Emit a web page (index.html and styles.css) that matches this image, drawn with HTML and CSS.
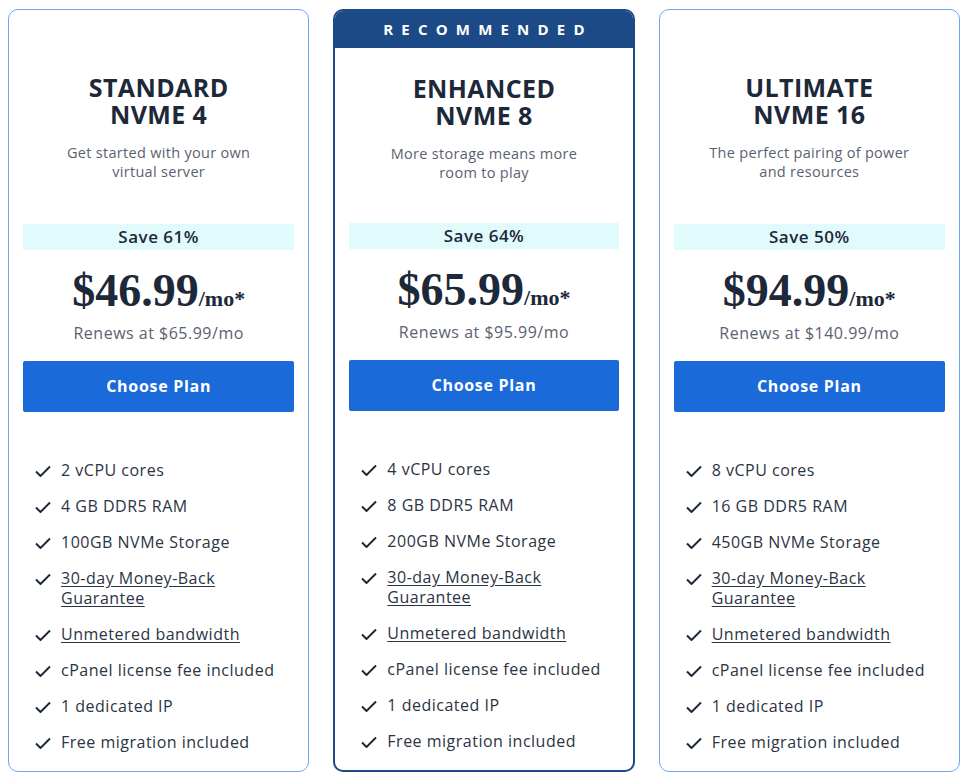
FILE: index.html
```html
<!DOCTYPE html>
<html lang="en">
<head>
<meta charset="utf-8">
<title>VPS Plans</title>
<link rel="stylesheet" href="styles.css">
</head>
<body>
<div class="plans">
  <div class="card">
    <div class="head">
      <h2 class="title">STANDARD<br>NVME 4</h2>
      <p class="sub">Get started with your own<br>virtual server</p>
    </div>
    <div class="save">Save 61%</div>
    <div class="price"><span class="amt">$46.99</span><span class="per">/mo*</span></div>
    <div class="renew">Renews at $65.99/mo</div>
    <a class="btn">Choose Plan</a>
    <ul class="feats">
      <li><svg class="chk" viewBox="0 0 16 12"><path d="M1 6.5 L5.5 11 L15 1.5"/></svg><span>2 vCPU cores</span></li>
      <li><svg class="chk" viewBox="0 0 16 12"><path d="M1 6.5 L5.5 11 L15 1.5"/></svg><span>4 GB DDR5 RAM</span></li>
      <li><svg class="chk" viewBox="0 0 16 12"><path d="M1 6.5 L5.5 11 L15 1.5"/></svg><span>100GB NVMe Storage</span></li>
      <li><svg class="chk" viewBox="0 0 16 12"><path d="M1 6.5 L5.5 11 L15 1.5"/></svg><span class="u">30-day Money-Back<br>Guarantee</span></li>
      <li><svg class="chk" viewBox="0 0 16 12"><path d="M1 6.5 L5.5 11 L15 1.5"/></svg><span class="u">Unmetered bandwidth</span></li>
      <li><svg class="chk" viewBox="0 0 16 12"><path d="M1 6.5 L5.5 11 L15 1.5"/></svg><span>cPanel license fee included</span></li>
      <li><svg class="chk" viewBox="0 0 16 12"><path d="M1 6.5 L5.5 11 L15 1.5"/></svg><span>1 dedicated IP</span></li>
      <li><svg class="chk" viewBox="0 0 16 12"><path d="M1 6.5 L5.5 11 L15 1.5"/></svg><span>Free migration included</span></li>
    </ul>
  </div>

  <div class="card rec">
    <div class="banner">RECOMMENDED</div>
    <div class="head">
      <h2 class="title">ENHANCED<br>NVME 8</h2>
      <p class="sub">More storage means more<br>room to play</p>
    </div>
    <div class="save">Save 64%</div>
    <div class="price"><span class="amt">$65.99</span><span class="per">/mo*</span></div>
    <div class="renew">Renews at $95.99/mo</div>
    <a class="btn">Choose Plan</a>
    <ul class="feats">
      <li><svg class="chk" viewBox="0 0 16 12"><path d="M1 6.5 L5.5 11 L15 1.5"/></svg><span>4 vCPU cores</span></li>
      <li><svg class="chk" viewBox="0 0 16 12"><path d="M1 6.5 L5.5 11 L15 1.5"/></svg><span>8 GB DDR5 RAM</span></li>
      <li><svg class="chk" viewBox="0 0 16 12"><path d="M1 6.5 L5.5 11 L15 1.5"/></svg><span>200GB NVMe Storage</span></li>
      <li><svg class="chk" viewBox="0 0 16 12"><path d="M1 6.5 L5.5 11 L15 1.5"/></svg><span class="u">30-day Money-Back<br>Guarantee</span></li>
      <li><svg class="chk" viewBox="0 0 16 12"><path d="M1 6.5 L5.5 11 L15 1.5"/></svg><span class="u">Unmetered bandwidth</span></li>
      <li><svg class="chk" viewBox="0 0 16 12"><path d="M1 6.5 L5.5 11 L15 1.5"/></svg><span>cPanel license fee included</span></li>
      <li><svg class="chk" viewBox="0 0 16 12"><path d="M1 6.5 L5.5 11 L15 1.5"/></svg><span>1 dedicated IP</span></li>
      <li><svg class="chk" viewBox="0 0 16 12"><path d="M1 6.5 L5.5 11 L15 1.5"/></svg><span>Free migration included</span></li>
    </ul>
  </div>

  <div class="card">
    <div class="head">
      <h2 class="title">ULTIMATE<br>NVME 16</h2>
      <p class="sub">The perfect pairing of power<br>and resources</p>
    </div>
    <div class="save">Save 50%</div>
    <div class="price"><span class="amt">$94.99</span><span class="per">/mo*</span></div>
    <div class="renew">Renews at $140.99/mo</div>
    <a class="btn">Choose Plan</a>
    <ul class="feats">
      <li><svg class="chk" viewBox="0 0 16 12"><path d="M1 6.5 L5.5 11 L15 1.5"/></svg><span>8 vCPU cores</span></li>
      <li><svg class="chk" viewBox="0 0 16 12"><path d="M1 6.5 L5.5 11 L15 1.5"/></svg><span>16 GB DDR5 RAM</span></li>
      <li><svg class="chk" viewBox="0 0 16 12"><path d="M1 6.5 L5.5 11 L15 1.5"/></svg><span>450GB NVMe Storage</span></li>
      <li><svg class="chk" viewBox="0 0 16 12"><path d="M1 6.5 L5.5 11 L15 1.5"/></svg><span class="u">30-day Money-Back<br>Guarantee</span></li>
      <li><svg class="chk" viewBox="0 0 16 12"><path d="M1 6.5 L5.5 11 L15 1.5"/></svg><span class="u">Unmetered bandwidth</span></li>
      <li><svg class="chk" viewBox="0 0 16 12"><path d="M1 6.5 L5.5 11 L15 1.5"/></svg><span>cPanel license fee included</span></li>
      <li><svg class="chk" viewBox="0 0 16 12"><path d="M1 6.5 L5.5 11 L15 1.5"/></svg><span>1 dedicated IP</span></li>
      <li><svg class="chk" viewBox="0 0 16 12"><path d="M1 6.5 L5.5 11 L15 1.5"/></svg><span>Free migration included</span></li>
    </ul>
  </div>
</div>
</body>
</html>
```

FILE: styles.css
```css
* { box-sizing: border-box; }
html, body { background: #ffffff; }
body {
  margin: 9px 8px 0 8px;
  font-family: "Open Sans", "Noto Sans", sans-serif;
  color: #1e2a3b;
}
.plans {
  display: grid;
  grid-template-columns: repeat(3, 1fr);
  gap: 24px;
}
.card {
  border: 1px solid #67a7f4;
  border-radius: 10px;
  padding: 64px 14px 19px 14px;
  display: flex;
  flex-direction: column;
  height: 763px;
}
.card.rec {
  border: 2px solid #1c4a86;
  padding: 0 14px 19px 14px;
  overflow: hidden;
}
.banner {
  background: #1c4a86;
  color: #ffffff;
  font-weight: 700;
  font-size: 15px;
  letter-spacing: 8.2px;
  height: 37px;
  line-height: 37px;
  text-align: center;
  margin: 0 -14px 27px -14px;
  padding-left: 8px;
}
.head { text-align: center; height: 150px; }
.title {
  margin: 0;
  font-size: 25px;
  line-height: 27px;
  font-weight: 700;
  letter-spacing: 0.4px;
  color: #1d2839;
}
.sub {
  margin: 15px 0 0;
  font-size: 14.5px;
  line-height: 19px;
  letter-spacing: 0.3px;
  color: #5a6271;
}
.save {
  background: #e1fbfc;
  height: 26px;
  line-height: 26px;
  text-align: center;
  font-size: 17px;
  font-weight: 600;
  letter-spacing: 0.5px;
  color: #1d2839;
}
.price {
  text-align: center;
  margin-top: 18px;
  height: 46px;
  line-height: 46px;
  font-family: "Liberation Serif", "Times New Roman", serif;
  font-weight: 700;
  color: #1d2839;
}
.amt { font-size: 46px; }
.per { font-size: 22px; }
.renew {
  text-align: center;
  font-size: 16px;
  line-height: 20px;
  letter-spacing: 0.5px;
  margin-top: 9px;
  color: #5a6271;
}
.btn {
  display: block;
  margin-top: 18px;
  background: #1b6ad9;
  color: #ffffff;
  height: 51px;
  line-height: 51px;
  text-align: center;
  font-weight: 700;
  font-size: 16px;
  letter-spacing: 0.7px;
  border-radius: 2px;
}
.feats {
  list-style: none;
  margin: 48px 0 0 0;
  padding: 0 0 0 12px;
  display: flex;
  flex-direction: column;
  gap: 16px;
}
.feats li {
  display: flex;
  align-items: flex-start;
  gap: 10px;
  font-size: 16px;
  line-height: 20px;
  letter-spacing: 0.5px;
  color: #2b3444;
}
.chk {
  width: 16px;
  height: 12px;
  margin-top: 5px;
  flex: none;
  fill: none;
  stroke: #1d2839;
  stroke-width: 2;
}
.u { text-decoration: underline; text-underline-offset: 2px; }
```
